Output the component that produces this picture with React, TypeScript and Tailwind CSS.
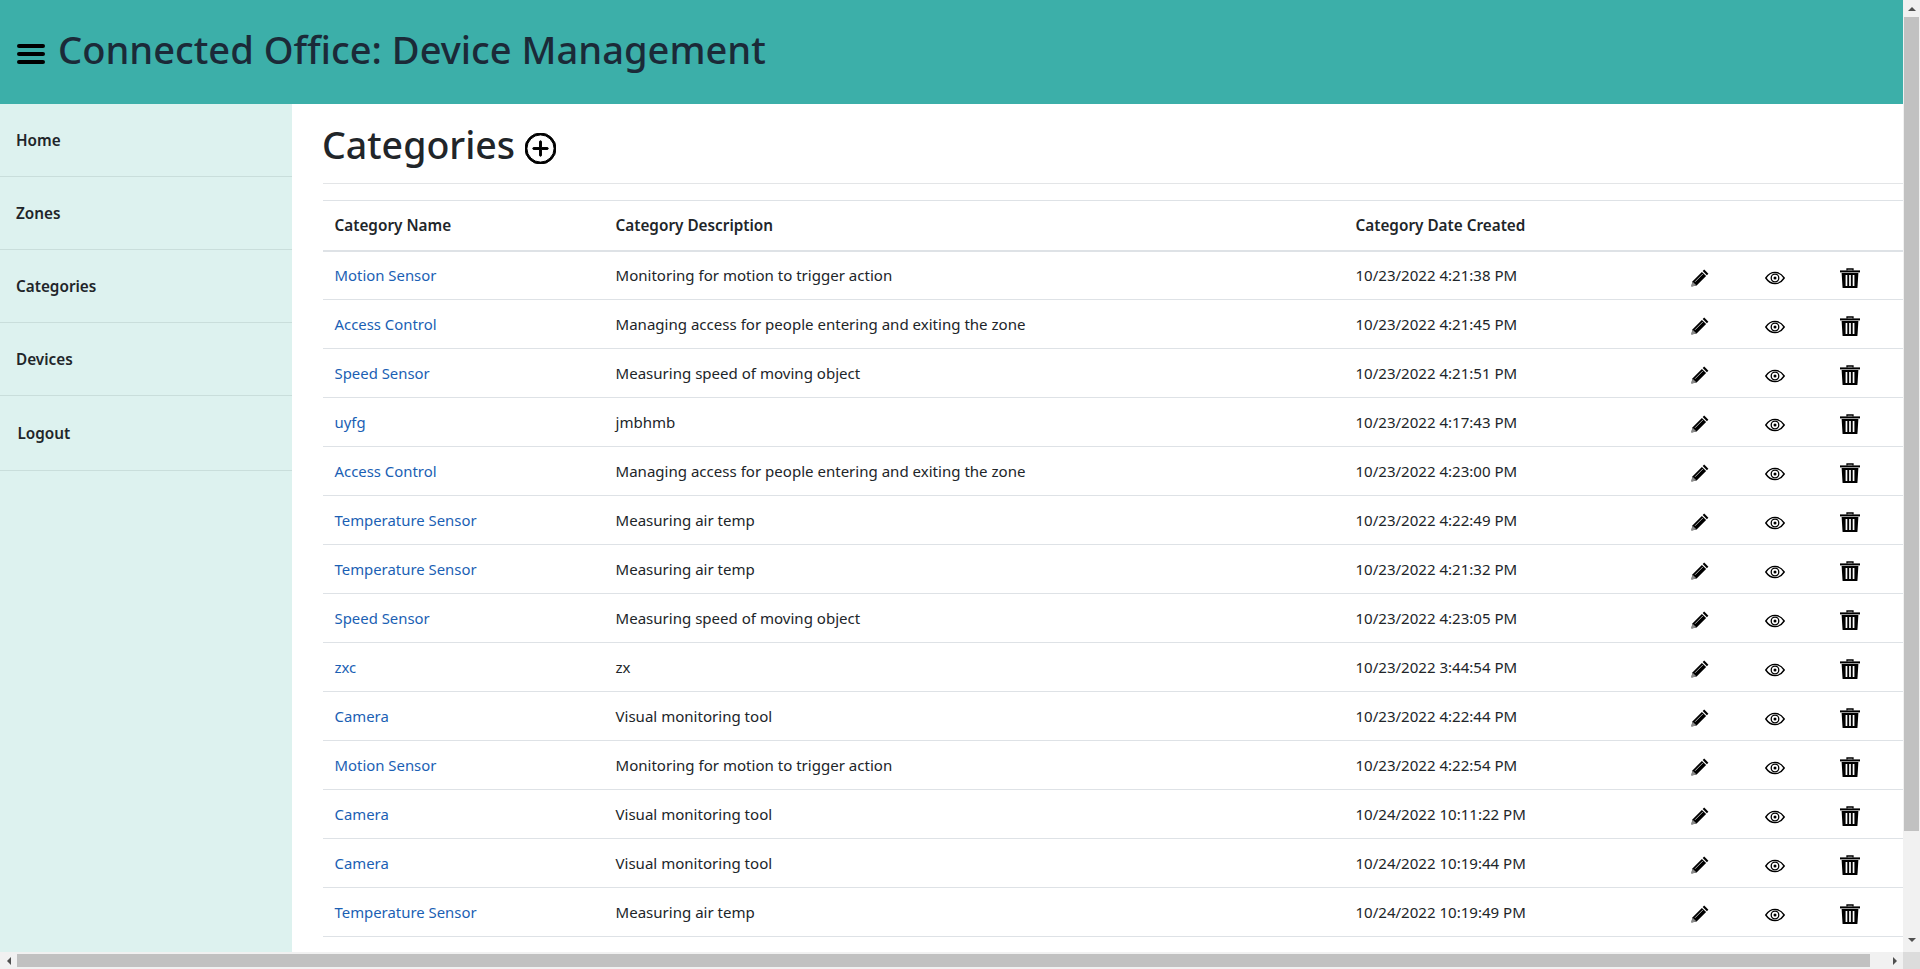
import { BsPlusCircle } from 'react-icons/bs';

const rows = [
  ['Motion Sensor', 'Monitoring for motion to trigger action', '10/23/2022 4:21:38 PM'],
  ['Access Control', 'Managing access for people entering and exiting the zone', '10/23/2022 4:21:45 PM'],
  ['Speed Sensor', 'Measuring speed of moving object', '10/23/2022 4:21:51 PM'],
  ['uyfg', 'jmbhmb', '10/23/2022 4:17:43 PM'],
  ['Access Control', 'Managing access for people entering and exiting the zone', '10/23/2022 4:23:00 PM'],
  ['Temperature Sensor', 'Measuring air temp', '10/23/2022 4:22:49 PM'],
  ['Temperature Sensor', 'Measuring air temp', '10/23/2022 4:21:32 PM'],
  ['Speed Sensor', 'Measuring speed of moving object', '10/23/2022 4:23:05 PM'],
  ['zxc', 'zx', '10/23/2022 3:44:54 PM'],
  ['Camera', 'Visual monitoring tool', '10/23/2022 4:22:44 PM'],
  ['Motion Sensor', 'Monitoring for motion to trigger action', '10/23/2022 4:22:54 PM'],
  ['Camera', 'Visual monitoring tool', '10/24/2022 10:11:22 PM'],
  ['Camera', 'Visual monitoring tool', '10/24/2022 10:19:44 PM'],
  ['Temperature Sensor', 'Measuring air temp', '10/24/2022 10:19:49 PM'],
];

const navItems = [
  { label: 'Home', height: 'h-[73px]' },
  { label: 'Zones', height: 'h-[73px]' },
  { label: 'Categories', height: 'h-[73px]' },
  { label: 'Devices', height: 'h-[73px]' },
  { label: 'Logout', height: 'h-[75px] pl-[17.5px]' },
];

function PencilIcon() {
  return (
    <svg width="20" height="20" viewBox="0 0 20 20" className="inline-block">
      <path d="M14.2 1.6 18.4 5.8 16.9 7.3 12.7 3.1Z" fill="#000" />
      <path d="M11.9 3.9 16.1 8.1 6.6 17.6 1.4 18.6 2.4 13.4Z" fill="#000" />
      <path d="M2.4 13.4 6.6 17.6 1.4 18.6Z" fill="#8a8a8a" />
      <path d="M5 13.8 12.8 6" stroke="#fff" strokeWidth="0.7" />
    </svg>
  );
}

function EyeIcon() {
  return (
    <svg width="20" height="14" viewBox="0 0 20 14" fill="none" stroke="#000" className="inline-block">
      <path d="M0.8 7C3.2 3.4 6.4 1.4 10 1.4S16.8 3.4 19.2 7C16.8 10.6 13.6 12.6 10 12.6S3.2 10.6 0.8 7Z" strokeWidth="1.4" />
      <circle cx="10" cy="7" r="3.8" strokeWidth="1.3" />
      <circle cx="10" cy="7" r="1.5" fill="#000" stroke="none" />
    </svg>
  );
}

function TrashIcon() {
  return (
    <svg width="20" height="20" viewBox="0 0 20 20" className="inline-block">
      <path d="M7 2.6V1H13V2.6" fill="none" stroke="#000" strokeWidth="1.3" />
      <rect x="0" y="2.4" width="20" height="2" fill="#000" />
      <path d="M1.6 5H18.4L17.4 20H2.6Z" fill="#000" />
      <rect x="5.6" y="7" width="1.7" height="11" fill="#fff" />
      <rect x="9.15" y="7" width="1.7" height="11" fill="#fff" />
      <rect x="12.7" y="7" width="1.7" height="11" fill="#fff" />
    </svg>
  );
}

export default function App() {
  return (
    <div className="flex h-[969px] w-full overflow-hidden bg-white font-['Noto_Sans','Open_Sans',sans-serif] text-[#212529]">
      <div className="flex min-w-0 flex-1 flex-col">
        <header className="flex h-[104px] shrink-0 items-center bg-[#3cafa9] pl-[17px]">
          <div className="mt-[4px] flex w-[28px] flex-col gap-[4px]">
            <span className="h-[4px] rounded-sm bg-black" />
            <span className="h-[4px] rounded-sm bg-black" />
            <span className="h-[4px] rounded-sm bg-black" />
          </div>
          <h1 className="mb-[6px] ml-[13px] text-[38.1px] leading-[48px] font-medium text-[#1b2a38]">
            Connected Office: Device Management
          </h1>
        </header>

        <div className="flex min-h-0 flex-1">
          <nav className="w-[292px] shrink-0 bg-[#ddf2ef]">
            {navItems.map((item) => (
              <div
                key={item.label}
                className={`flex items-center border-b border-[#c9dedb] pl-[16px] text-[15.3px] font-semibold text-[#212529] ${item.height}`}
              >
                {item.label}
              </div>
            ))}
          </nav>

          <main className="min-w-0 flex-1 overflow-hidden pl-[31px]">
            <div className="flex h-[80px] w-[1700px] items-center border-b border-[#e3e5e7] pt-[3px]">
              <h2 className="-ml-[1px] text-[37.5px] leading-[48px] font-medium text-[#212529]">Categories</h2>
              <BsPlusCircle className="ml-[10px] mt-[6px] text-[31px] text-black" stroke="currentColor" strokeWidth={0.5} />
            </div>

            <table className="mt-[16px] w-[1600px] table-fixed border-collapse border-t border-[#dee2e6] text-[15.05px]">
              <colgroup>
                <col className="w-[281px]" />
                <col className="w-[740px]" />
                <col className="w-[318px]" />
                <col className="w-[75px]" />
                <col className="w-[75px]" />
                <col className="w-[111px]" />
              </colgroup>
              <thead>
                <tr className="h-[50px] border-b-[2px] border-[#dee2e6] text-left text-[15.3px]">
                  <th className="pl-[11.5px] font-semibold">Category Name</th>
                  <th className="pl-[11.5px] font-semibold">Category Description</th>
                  <th className="pl-[11.5px] font-semibold">Category Date Created</th>
                  <th />
                  <th />
                  <th />
                </tr>
              </thead>
              <tbody>
                {rows.map((row, i) => (
                  <tr key={i} className="h-[49px] border-b border-[#dee2e6]">
                    <td className="pl-[11.5px] text-[14.9px] text-[#1b5fb4]">{row[0]}</td>
                    <td className="pl-[11.5px]">{row[1]}</td>
                    <td className="pl-[11.5px]">{row[2]}</td>
                    <td className="pt-[2px] text-center"><PencilIcon /></td>
                    <td className="pt-[2px] text-center"><EyeIcon /></td>
                    <td className="pt-[2px] pr-[36px] text-center"><TrashIcon /></td>
                  </tr>
                ))}
              </tbody>
            </table>
          </main>
        </div>

        <div className="flex h-[17px] shrink-0 items-center bg-[#f1f1f1]">
          <div className="flex w-[17px] justify-center">
            <span className="h-0 w-0 border-y-[4px] border-r-[4px] border-y-transparent border-r-[#505050]" />
          </div>
          <div className="h-[13px] flex-1 bg-[#c1c1c1]" />
          <div className="flex w-[33px] justify-end pr-[6px]">
            <span className="h-0 w-0 border-y-[4px] border-l-[4px] border-y-transparent border-l-[#505050]" />
          </div>
        </div>
      </div>

      <div className="flex w-[17px] shrink-0 flex-col bg-[#f1f1f1]">
        <div className="flex h-[17px] items-center justify-center">
          <span className="h-0 w-0 border-x-[4px] border-b-[4px] border-x-transparent border-b-[#505050]" />
        </div>
        <div className="mx-[1px] h-[814px] bg-[#c1c1c1]" />
        <div className="flex flex-1 items-start justify-center pt-[107px]">
          <span className="h-0 w-0 border-x-[4px] border-t-[4px] border-x-transparent border-t-[#505050]" />
        </div>
        <div className="h-[17px] shrink-0 bg-[#dcdcdc]" />
      </div>
    </div>
  );
}
